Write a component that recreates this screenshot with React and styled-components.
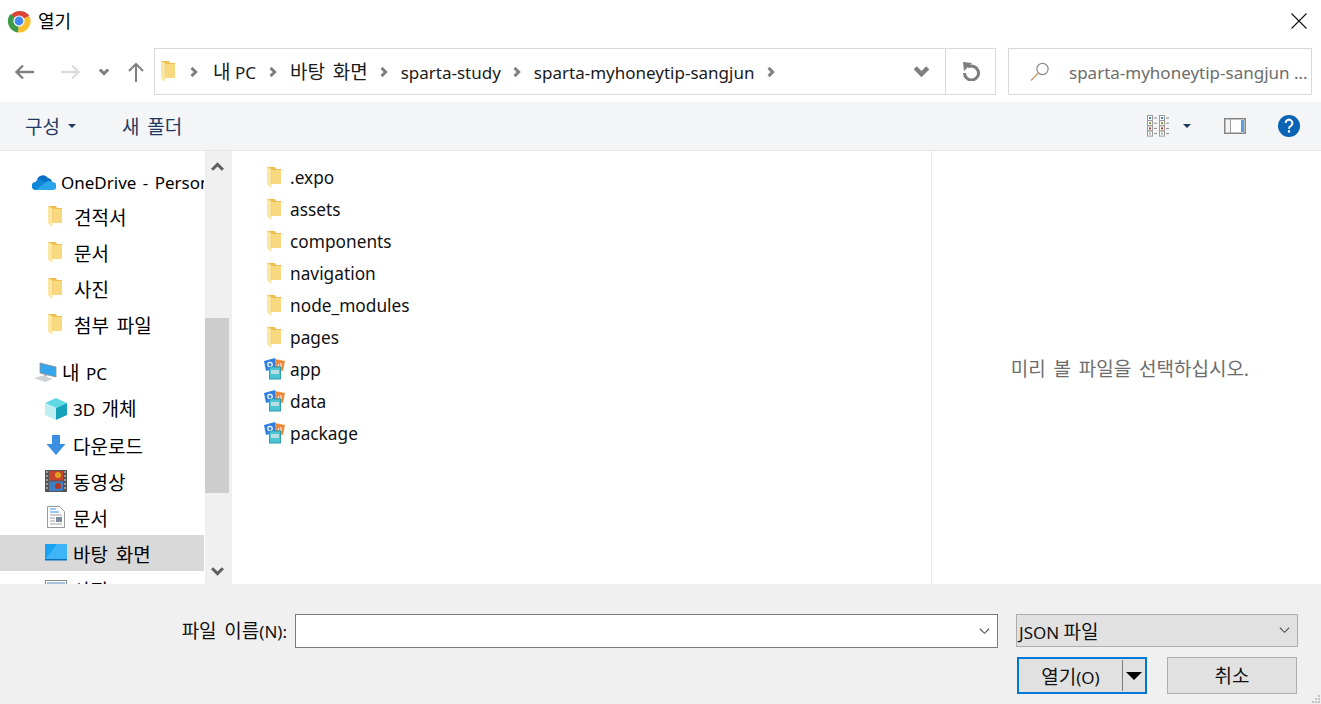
import React from "react";
import styled, { createGlobalStyle } from "styled-components";

const GlobalStyle = createGlobalStyle`
	html, body {
		margin: 0;
		padding: 0;
		background: #fff;
		overflow: hidden;
	}
	* {
		box-sizing: border-box;
	}
	body {
		font-family: "Noto Sans", "Noto Sans CJK KR", sans-serif;
		font-size: 17px;
		color: #000;
	}
`;

const Dialog = styled.div`
	width: 1321px;
	height: 704px;
	display: flex;
	flex-direction: column;
	overflow: hidden;
`;

/* hangul runs sit larger than the latin ones, as in the windows font */
const Ko = styled.span`
	font-family: "Noto Sans CJK KR", sans-serif;
	font-size: 19px;
	word-spacing: 3.5px;
	line-height: 1;
`;

/* title bar */
const TitleBar = styled.div`
	height: 48px;
	flex: none;
	display: flex;
	align-items: center;
	padding: 0 14px 6px 7px;
`;

const Title = styled.span`
	margin: -2px 0 0 7px;
	font-size: 18px;
	flex: 1;
`;

/* address row */
const AddressRow = styled.div`
	height: 47px;
	flex: none;
	display: flex;
	align-items: stretch;
	padding-right: 9px;
`;

const NavButtons = styled.div`
	width: 154px;
	flex: none;
	display: flex;
	align-items: center;
	padding-left: 14px;
`;

const NavSlot = styled.span`
	width: ${(p) => p.$w}px;
	flex: none;
	display: flex;
`;

const AddressBox = styled.div`
	width: 842px;
	flex: none;
	display: flex;
	align-items: center;
	border: 1.5px solid #d9d9d9;
	padding-left: 6px;
`;

const Crumbs = styled.div`
	flex: 1;
	display: flex;
	align-items: center;
	color: #1a1a1a;
`;

const Crumb = styled.span`
	white-space: nowrap;
	padding-top: 1px;
`;

const CrumbSep = styled.span`
	width: ${(p) => p.$w}px;
	flex: none;
	display: flex;
	justify-content: center;
	padding-top: 1px;
`;

const AddressDrop = styled.div`
	width: 48px;
	flex: none;
	display: flex;
	justify-content: center;
`;

const RefreshBox = styled.div`
	width: 50px;
	height: 100%;
	flex: none;
	display: flex;
	align-items: center;
	justify-content: center;
	border-left: 1.5px solid #d9d9d9;
`;

const SearchBox = styled.div`
	margin-left: 12px;
	flex: 1;
	display: flex;
	align-items: center;
	border: 1.5px solid #d9d9d9;
	padding-left: 21px;
	color: #6d6d6d;
	white-space: nowrap;
	overflow: hidden;
`;

const SearchText = styled.span`
	margin-left: 19px;
	margin-top: 2px;
`;

/* command bar */
const CommandBar = styled.div`
	margin-top: 7px;
	height: 49px;
	flex: none;
	display: flex;
	align-items: center;
	background: #f4f5f7;
	border-bottom: 1px solid #e6e6e6;
	padding: 0 21px 1px 25px;
	color: #1e3a5f;
`;

const Command = styled.span`
	display: flex;
	align-items: center;
	margin-right: ${(p) => p.$gap || 0}px;
`;

const Caret = styled.span`
	width: 0;
	height: 0;
	margin-left: ${(p) => p.$ml || 0}px;
	border-left: 4px solid transparent;
	border-right: 4px solid transparent;
	border-top: 4px solid #1e3a5f;
`;

const BarSpacer = styled.div`
	flex: 1;
`;

const IconSlot = styled.span`
	display: flex;
	margin-left: ${(p) => p.$ml || 0}px;
`;

/* main area */
const Main = styled.div`
	flex: 1;
	min-height: 0;
	display: flex;
`;

const Sidebar = styled.div`
	width: 205px;
	flex: none;
	overflow: hidden;
	padding-top: 11px;
`;

const TreeRow = styled.div`
	height: 36px;
	width: 204px;
	display: flex;
	align-items: center;
	padding-left: ${(p) => p.$indent}px;
	padding-top: ${(p) => p.$pt || 0}px;
	margin-top: ${(p) => p.$mt || 0}px;
	background: ${(p) => (p.$selected ? "#d9d9d9" : "transparent")};
	white-space: nowrap;
	word-spacing: 2px;
	overflow: hidden;
`;

const TreeIcon = styled.span`
	width: ${(p) => p.$w}px;
	flex: none;
	display: flex;
`;

const Scrollbar = styled.div`
	width: 24px;
	flex: none;
	display: flex;
	flex-direction: column;
	background: #f0f0f0;
`;

const ScrollArrow = styled.div`
	height: 30px;
	flex: none;
	display: flex;
	align-items: center;
	justify-content: center;
	padding-top: ${(p) => (p.$low ? 4 : 0)}px;
`;

const ScrollThumb = styled.div`
	height: 175px;
	flex: none;
	margin-top: 137px;
	background: #cdcdcd;
`;

const ScrollRest = styled.div`
	flex: 1;
`;

const Gutter = styled.div`
	width: 3px;
	flex: none;
	background: #f0f0f0;
`;

const FileList = styled.div`
	width: 699px;
	flex: none;
	padding: 10px 0 0 32px;
`;

const FileRow = styled.div`
	height: 32px;
	display: flex;
	align-items: center;
	color: #111;
	font-size: 17.3px;
`;

const FileIcon = styled.span`
	width: 20px;
	margin-right: 6px;
	flex: none;
	display: flex;
	justify-content: center;
`;

const JsonSvg = styled.svg`
	flex: none;
`;

const PreviewPane = styled.div`
	flex: 1;
	border-left: 1px solid #ececec;
	display: flex;
	align-items: center;
	justify-content: center;
	padding-left: 7px;
	color: #6d6d6d;
`;

/* footer */
const Footer = styled.div`
	height: 120px;
	flex: none;
	background: #f0f0f0;
	padding-top: 30px;
	position: relative;
`;

const FooterRow = styled.div`
	display: flex;
	align-items: center;
	justify-content: flex-end;
`;

const FieldText = styled.span`
	padding-top: ${(p) => p.$pt || 1}px;
	color: #111;
`;

const NameLabel = styled.label`
	margin-right: 8px;
`;

const NameField = styled.div`
	width: 703px;
	height: 34px;
	display: flex;
	align-items: center;
	justify-content: flex-end;
	background: #fff;
	border: 1.5px solid #7a7a7a;
	padding-right: 7px;
`;

const TypeSelect = styled.div`
	width: 282px;
	height: 33px;
	margin: 0 23px 1px 18px;
	display: flex;
	align-items: center;
	justify-content: space-between;
	background: #e1e1e1;
	border: 1.5px solid #adadad;
	padding: 0 7px 0 2px;
`;

const ButtonRow = styled(FooterRow)`
	margin-top: 9px;
	padding-right: 24px;
`;

const SplitButton = styled.div`
	width: 130px;
	height: 37px;
	display: flex;
	align-items: stretch;
	background: #e1e1e1;
	border: 2.5px solid #0078d7;
	margin-right: 20px;
`;

const SplitMain = styled.div`
	flex: 1;
	display: flex;
	align-items: center;
	justify-content: center;
`;

const SplitDrop = styled.div`
	width: 23px;
	flex: none;
	margin: 1px 0;
	display: flex;
	align-items: center;
	justify-content: center;
	border-left: 1.5px solid #7a7a7a;
`;

const DropTriangle = styled.span`
	width: 0;
	height: 0;
	border-left: 8px solid transparent;
	border-right: 8px solid transparent;
	border-top: 8px solid #000;
`;

const CancelButton = styled.div`
	width: 130px;
	height: 37px;
	display: flex;
	align-items: center;
	justify-content: center;
	background: #e1e1e1;
	border: 1.5px solid #adadad;
`;

const ResizeGrip = styled.svg`
	position: absolute;
	right: 0;
	bottom: 0;
`;

/* drawings */
const ChromeLogo = () => (
	<svg width="24" height="24" viewBox="0 0 24 24">
		<path d="M12 12 L3.3 7 A11.5 11.5 0 0 1 22.4 7 Z" fill="#db4437" />
		<path d="M12 12 L22.4 7 A11.5 11.5 0 0 1 11 23.5 Z" fill="#fbc02d" />
		<path d="M12 12 L11 23.5 A11.5 11.5 0 0 1 3.3 5 Z" fill="#3c9a48" />
		<circle cx="12" cy="12" r="5.6" fill="#fff" />
		<circle cx="12" cy="12" r="4.4" fill="#4285f4" />
	</svg>
);

const Folder = () => (
	<svg width="14" height="21" viewBox="0 0 14 21">
		<path d="M0 0H8L9 2H14V17H0z" fill="#efbf50" />
		<path d="M5 3H14V17H5z" fill="#f9d97f" />
		<path d="M0 0 4.5 2.5V21L0 17.5z" fill="#fbe6a4" />
	</svg>
);

const Chevron = ({ size = 10, color = "#808080", dir = "right", width = 3.6 }) => {
	const pts = {
		right: "3,1 8,6 3,11",
		down: "1,3 6,8 11,3",
		up: "1,9 6,4 11,9",
	}[dir];
	return (
		<svg width={size} height={size} viewBox="0 0 12 12">
			<polyline points={pts} fill="none" stroke={color} strokeWidth={width} />
		</svg>
	);
};

const ArrowLeft = ({ color }) => (
	<svg width="20" height="16" viewBox="0 0 20 16">
		<path d="M20 8H3M9 1.5 2.5 8 9 14.5" fill="none" stroke={color} strokeWidth="2.4" />
	</svg>
);

const ArrowRight = ({ color }) => (
	<svg width="20" height="16" viewBox="0 0 20 16">
		<path d="M0 8H17M11 1.5 17.5 8 11 14.5" fill="none" stroke={color} strokeWidth="2.4" />
	</svg>
);

const ArrowUp = () => (
	<svg width="16" height="20" viewBox="0 0 16 20">
		<path d="M8 20V2.5M1 9 8 2l7 7" fill="none" stroke="#808080" strokeWidth="2" />
	</svg>
);

const Refresh = () => (
	<svg width="18" height="19" viewBox="0 0 18 19">
		<path d="M6 5A7 7 0 1 1 2.5 11" fill="none" stroke="#7d7d7d" strokeWidth="3" />
		<path d="M1 0 10 1 2 9z" fill="#7d7d7d" />
	</svg>
);

const SearchGlass = () => (
	<svg width="20" height="20" viewBox="0 0 20 20">
		<circle cx="12.5" cy="7" r="5.6" fill="none" stroke="#8b8b8b" strokeWidth="1.2" />
		<path d="M8.4 11 1 18.6" stroke="#c79a68" strokeWidth="1.4" />
	</svg>
);

const ViewsIcon = () => (
	<svg width="24" height="22" viewBox="0 0 24 22">
		{[0, 12].map((x) =>
			["#3d86c6", "#8a9a2a", "#c0392b", "#a8b6a0"].map((c, i) => (
				<g key={x + c}>
					<rect x={x + 0.5} y={i * 5.2 + 0.5} width="5" height="5" fill="#fff" stroke="#9a9a9a" />
					<rect x={x + 2} y={i * 5.2 + 2} width="2" height="2" fill={c} />
					<path d={`M${x + 7} ${i * 5.2 + 3}h3`} stroke="#8a8a8a" />
				</g>
			)),
		)}
	</svg>
);

const PaneIcon = () => (
	<svg width="22" height="18" viewBox="0 0 22 18">
		<rect x="0.75" y="1.75" width="20.5" height="14.5" fill="#fff" stroke="#848484" strokeWidth="1.5" />
		<rect x="2" y="3" width="5" height="12" fill="#f4f4f4" />
		<path d="M6.5 2v14" stroke="#9a9a9a" />
		<rect x="17" y="3" width="3" height="12" fill="#5aa0e0" />
	</svg>
);

const HelpIcon = () => (
	<svg width="22" height="22" viewBox="0 0 22 22">
		<circle cx="11" cy="11" r="11" fill="#0a63b5" />
		<path d="M7.6 8a3.4 3.4 0 1 1 5.4 2.8c-1.3.9-2 1.5-2 3" fill="none" stroke="#fff" strokeWidth="2" />
		<rect x="9.9" y="15.2" width="2.2" height="2.4" fill="#fff" />
	</svg>
);

const CloseIcon = () => (
	<svg width="16" height="16" viewBox="0 0 16 16">
		<path d="M.5.5l15 15M15.5.5l-15 15" stroke="#111" strokeWidth="1.1" />
	</svg>
);

const CloudIcon = () => (
	<svg width="24" height="16" viewBox="0 0 24 16">
		<path d="M5 7a6 6 0 0 1 11-3 5 5 0 0 1 4 4L10 12z" fill="#0b6fc7" />
		<path d="M4 16a4 4 0 0 1-.6-8A5 5 0 0 1 10 6l4 3 5 7z" fill="#0f86d8" />
		<path d="M4 16 14 8a5 5 0 0 1 6 0 4 4 0 0 1 1 8z" fill="#2ba5ea" />
	</svg>
);

const PcIcon = () => (
	<svg width="24" height="22" viewBox="0 0 24 22">
		<path d="M7 1 23 5v10L7 11z" fill="#35a6ee" stroke="#8d8d8d" strokeWidth=".8" />
		<path d="M10 12 14 13 13 15z" fill="#a9a9a9" />
		<path d="M1 16 10 13.5 20 17 12 20z" fill="#cfd3d6" />
	</svg>
);

const CubeIcon = () => (
	<svg width="22" height="22" viewBox="0 0 22 22">
		<path d="M11 0 22 5 11 10 0 5z" fill="#5fd8e6" />
		<path d="M0 5 11 10V22L0 17z" fill="#bdeff2" />
		<path d="M22 5 11 10V22L22 17z" fill="#14a3b8" />
	</svg>
);

const DownloadIcon = () => (
	<svg width="20" height="20" viewBox="0 0 20 20">
		<path d="M6 0h8v9h5.5L10 20 .5 9H6z" fill="#3a8fe0" />
	</svg>
);

const FilmIcon = () => (
	<svg width="22" height="22" viewBox="0 0 22 22">
		<rect width="22" height="22" fill="#555" />
		<rect x="4" y="1" width="14" height="9.5" fill="#c9442f" />
		<rect x="4" y="11.5" width="14" height="9.5" fill="#3d7ec4" />
		<circle cx="13" cy="5" r="3" fill="#e0a020" />
		<circle cx="13" cy="16" r="3" fill="#b7371f" />
		<path d="M1 2h2M1 6h2M1 10h2M1 14h2M1 18h2M19 2h2M19 6h2M19 10h2M19 14h2M19 18h2" stroke="#ddd" />
	</svg>
);

const DocIcon = () => (
	<svg width="18" height="22" viewBox="0 0 18 22">
		<path d="M.5.5h12l5 5v16H.5z" fill="#fff" stroke="#9a9a9a" />
		<path d="M3 3h6M3 6h9" stroke="#3a8fe0" />
		<path d="M3 9h12M3 12h5M3 15h5M3 18h12" stroke="#a0a0a0" />
		<rect x="9" y="11" width="6" height="5" fill="#7b8da0" />
	</svg>
);

const DesktopIcon = () => (
	<svg width="22" height="18" viewBox="0 0 22 18">
		<rect width="22" height="16" fill="#1ba1f2" />
		<path d="M0 16 12 0h10v16z" fill="#3fb4f6" />
		<rect y="15" width="22" height="1.5" fill="#0b6fb8" />
	</svg>
);

const ScreenIcon = () => (
	<svg width="22" height="18" viewBox="0 0 22 18">
		<rect x=".5" y=".5" width="21" height="16" fill="#fff" stroke="#8a8a8a" />
		<rect x="2" y="2" width="18" height="4" fill="#a8c4e0" />
	</svg>
);

const JsonFile = () => (
	<JsonSvg width="21" height="22" viewBox="0 0 21 22">
		<path d="M0 3 11 0 12 10 2 13z" fill="#2f7fe0" />
		<path d="M11 1 21 3 19 13 11 11z" fill="#f0883a" />
		<circle cx="6" cy="6.5" r="2.2" fill="none" stroke="#fff" strokeWidth="1.2" />
		<path d="M14.5 8V6M17 9V5" stroke="#fff" />
		<rect x="5.5" y="9" width="11" height="12" fill="#4cc4d2" stroke="#2b9fb0" />
		<rect x="7" y="12" width="8" height="4" fill="#b9dde2" />
	</JsonSvg>
);

const crumbs = [
	{ label: <><Ko>내</Ko> PC</>, key: "pc", sep: 34 },
	{ label: <Ko>바탕 화면</Ko>, key: "desktop", sep: 33 },
	{ label: "sparta-study", key: "study", sep: 33 },
	{ label: "sparta-myhoneytip-sangjun", key: "honey", sep: 33 },
];

const tree = [
	{ key: "onedrive", label: "OneDrive - Personal", icon: <CloudIcon />, indent: 32, w: 29, pt: 4 },
	{ key: "quote", label: <Ko>견적서</Ko>, icon: <Folder />, indent: 48, w: 26 },
	{ key: "docs", label: <Ko>문서</Ko>, icon: <Folder />, indent: 48, w: 26 },
	{ key: "photos", label: <Ko>사진</Ko>, icon: <Folder />, indent: 48, w: 26 },
	{ key: "attach", label: <Ko>첨부 파일</Ko>, icon: <Folder />, indent: 48, w: 26 },
	{ key: "pc", label: <span><Ko>내</Ko> PC</span>, icon: <PcIcon />, indent: 33, w: 29, mt: 13 },
	{ key: "3d", label: <span>3D <Ko>개체</Ko></span>, icon: <CubeIcon />, indent: 45, w: 28 },
	{ key: "down", label: <Ko>다운로드</Ko>, icon: <DownloadIcon />, indent: 46, w: 27 },
	{ key: "video", label: <Ko>동영상</Ko>, icon: <FilmIcon />, indent: 45, w: 28 },
	{ key: "docs2", label: <Ko>문서</Ko>, icon: <DocIcon />, indent: 47, w: 26 },
	{ key: "desk", label: <Ko>바탕 화면</Ko>, icon: <DesktopIcon />, indent: 45, w: 28, selected: true },
	{ key: "photos2", label: <Ko>사진</Ko>, icon: <ScreenIcon />, indent: 45, w: 28 },
];

const files = [
	{ name: ".expo", folder: true },
	{ name: "assets", folder: true },
	{ name: "components", folder: true },
	{ name: "navigation", folder: true },
	{ name: "node_modules", folder: true },
	{ name: "pages", folder: true },
	{ name: "app" },
	{ name: "data" },
	{ name: "package" },
];

export default function App() {
	return (
		<Dialog>
			<GlobalStyle />
			<TitleBar>
				<ChromeLogo />
				<Title>열기</Title>
				<CloseIcon />
			</TitleBar>

			<AddressRow>
				<NavButtons>
					<NavSlot $w={47}><ArrowLeft color="#808080" /></NavSlot>
					<NavSlot $w={38}><ArrowRight color="#dcdcdc" /></NavSlot>
					<NavSlot $w={29}><Chevron dir="down" size={10} /></NavSlot>
					<NavSlot $w={16}><ArrowUp /></NavSlot>
				</NavButtons>
				<AddressBox>
					<Crumbs>
						<Folder />
						<CrumbSep $w={38}><Chevron /></CrumbSep>
						{crumbs.map((c) => (
							<React.Fragment key={c.key}>
								<Crumb>{c.label}</Crumb>
								<CrumbSep $w={c.sep}><Chevron /></CrumbSep>
							</React.Fragment>
						))}
					</Crumbs>
					<AddressDrop><Chevron dir="down" size={15} /></AddressDrop>
					<RefreshBox><Refresh /></RefreshBox>
				</AddressBox>
				<SearchBox>
					<SearchGlass />
					<SearchText>sparta-myhoneytip-sangjun ...</SearchText>
				</SearchBox>
			</AddressRow>

			<CommandBar>
				<Command $gap={46}><Ko>구성</Ko><Caret $ml={8} /></Command>
				<Command><Ko>새 폴더</Ko></Command>
				<BarSpacer />
				<IconSlot><ViewsIcon /></IconSlot>
				<Caret $ml={12} />
				<IconSlot $ml={33}><PaneIcon /></IconSlot>
				<IconSlot $ml={32}><HelpIcon /></IconSlot>
			</CommandBar>

			<Main>
				<Sidebar>
					{tree.map((t) => (
						<TreeRow key={t.key} $indent={t.indent} $mt={t.mt} $pt={t.pt} $selected={t.selected}>
							<TreeIcon $w={t.w}>{t.icon}</TreeIcon>
							{t.label}
						</TreeRow>
					))}
				</Sidebar>
				<Scrollbar>
					<ScrollArrow><Chevron dir="up" size={13} color="#606060" width={2.8} /></ScrollArrow>
					<ScrollThumb />
					<ScrollRest />
					<ScrollArrow $low><Chevron dir="down" size={13} color="#606060" width={2.8} /></ScrollArrow>
				</Scrollbar>
				<Gutter />
				<FileList>
					{files.map((f) => (
						<FileRow key={f.name}>
							<FileIcon>{f.folder ? <Folder /> : <JsonFile />}</FileIcon>
							{f.name}
						</FileRow>
					))}
				</FileList>
				<PreviewPane><Ko>미리 볼 파일을 선택하십시오.</Ko></PreviewPane>
			</Main>

			<Footer>
				<FooterRow>
					<NameLabel><FieldText $pt={2}><Ko>파일 이름</Ko>(N):</FieldText></NameLabel>
					<NameField><Chevron dir="down" size={11} color="#555" width={1.2} /></NameField>
					<TypeSelect>
						<FieldText $pt={3}>JSON <Ko>파일</Ko></FieldText>
						<Chevron dir="down" size={11} color="#555" width={1.2} />
					</TypeSelect>
				</FooterRow>
				<ButtonRow>
					<SplitButton>
						<SplitMain><FieldText $pt={3}><Ko>열기</Ko>(O)</FieldText></SplitMain>
						<SplitDrop><DropTriangle /></SplitDrop>
					</SplitButton>
					<CancelButton><FieldText $pt={2}><Ko>취소</Ko></FieldText></CancelButton>
				</ButtonRow>
				<ResizeGrip width="10" height="10" viewBox="0 0 10 10">
					<path d="M7 1h2v2H7zM4 4h2v2H4zM7 4h2v2H7zM1 7h2v2H1zM4 7h2v2H4zM7 7h2v2H7z" fill="#c4c4c4" />
				</ResizeGrip>
			</Footer>
		</Dialog>
	);
}
